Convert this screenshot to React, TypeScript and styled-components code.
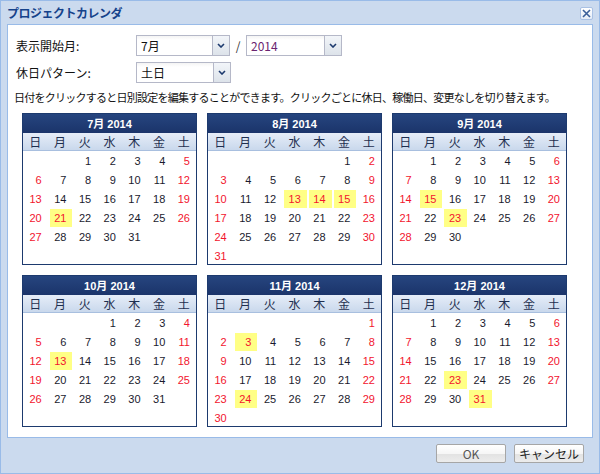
import React from "react";
import styled, { createGlobalStyle } from "styled-components";

const GlobalStyle = createGlobalStyle`
  html, body {
    margin: 0;
    padding: 0;
    background: #ffffff;
  }
  body {
    font-family: "Noto Sans CJK JP", "Liberation Sans", sans-serif;
  }
`;

const Window = styled.div`
  width: 600px;
  height: 474px;
  box-sizing: border-box;
  border: 1px solid #99bbe8;
  background: #cbdaee;
  display: flex;
  flex-direction: column;
  padding: 0 6px;
`;

const TitleBar = styled.div`
  height: 23px;
  display: flex;
  align-items: center;
  justify-content: space-between;
`;

const Title = styled.span`
  font-size: 12px;
  font-weight: bold;
  color: #15428b;
  letter-spacing: -0.5px;
`;

const CloseButton = styled.div`
  width: 11px;
  height: 11px;
  border: 1px solid #a9c1e4;
  border-radius: 2px;
  background: linear-gradient(#ffffff, #e4ecf7);
  display: flex;
  align-items: center;
  justify-content: center;
  margin-top: 1px;
`;

const Body = styled.div`
  height: 414px;
  box-sizing: border-box;
  background: #ffffff;
  border: 1px solid #99bbe8;
  padding: 10px 8px 0 6px;
`;

const FormRow = styled.div`
  display: flex;
  align-items: center;
  height: 21px;
  margin-bottom: 6px;
  padding-left: 2px;
`;

const Label = styled.div`
  width: 120px;
  font-size: 12px;
  color: #111;
`;

const Combo = styled.div<{ $w: number }>`
  width: ${({ $w }) => $w}px;
  height: 21px;
  box-sizing: border-box;
  display: flex;
  border: 1px solid #b5b8c8;
  background: linear-gradient(#f4f4f4 0, #ffffff 4px);
`;

const ComboText = styled.div<{ $color?: string }>`
  flex: 1;
  font-size: 12px;
  line-height: 19px;
  padding-left: 4px;
  color: ${({ $color }) => $color || "#111"};
`;

const Trigger = styled.div`
  width: 16px;
  border-left: 1px solid #b5b8c8;
  background: linear-gradient(#f2f5f9, #dde3ea);
  display: flex;
  align-items: center;
  justify-content: center;
`;

const Slash = styled.span`
  width: 16px;
  text-align: center;
  font-size: 12px;
  color: #333;
`;

const Note = styled.div`
  font-size: 11px;
  letter-spacing: -0.75px;
  color: #111;
  margin-top: -1px;
  height: 18px;
  line-height: 18px;
`;

const CalendarGrid = styled.div`
  display: grid;
  grid-template-columns: repeat(3, 175px);
  column-gap: 10px;
  row-gap: 10px;
  margin: 7px 0 0 8px;
`;

const Calendar = styled.div`
  border: 1px solid #1d3a6e;
  background: #ffffff;
  height: 150px;
`;

const CalHeader = styled.div`
  height: 19px;
  line-height: 20px;
  background: linear-gradient(#26457f, #1b346a);
  color: #ffffff;
  text-align: center;
  font-size: 11px;
  font-weight: bold;
  font-family: "Liberation Sans", "Noto Sans CJK JP", sans-serif;
`;

const DowRow = styled.div`
  display: grid;
  grid-template-columns: repeat(7, 1fr);
  height: 18px;
  box-sizing: border-box;
  background: linear-gradient(#e6edf8, #c9d8ec);
  border-bottom: 1px solid #a8bfdf;
`;

const Dow = styled.div`
  text-align: center;
  font-size: 12px;
  line-height: 17px;
  color: #1f2f4f;
`;

const Days = styled.div`
  display: grid;
  grid-template-columns: repeat(7, 1fr);
  grid-auto-rows: 19px;
`;

const Day = styled.div<{ $red: boolean; $holiday: boolean }>`
  margin: 1px 0 0 2px;
  height: 18px;
  line-height: 18px;
  text-align: right;
  padding-right: 6px;
  font-size: 11px;
  font-family: "Liberation Sans", sans-serif;
  color: ${({ $red }) => ($red ? "#f2142e" : "#1a1a2e")};
  background: ${({ $holiday }) => ($holiday ? "#ffff85" : "transparent")};
`;

const Footer = styled.div`
  flex: 1;
  display: flex;
  justify-content: flex-end;
  align-items: flex-start;
  gap: 8px;
  padding: 6px 9px 0 0;
`;

const Button = styled.div<{ $dim?: boolean }>`
  width: 70px;
  height: 19px;
  box-sizing: border-box;
  border: 1px solid #a6a6a6;
  border-radius: 2px;
  background: linear-gradient(#ffffff 0, #f6f6f6 50%, #e2e2e2 51%, #ececec 100%);
  font-size: 12px;
  line-height: 17px;
  text-align: center;
  color: ${({ $dim }) => ($dim ? "#555" : "#222")};
`;

const Chevron = () => (
  <svg width="8" height="5" viewBox="0 0 8 5">
    <path d="M1 1 L4 4 L7 1" stroke="#1d3a6e" strokeWidth="1.6" fill="none" />
  </svg>
);

const DOW = ["日", "月", "火", "水", "木", "金", "土"];

// 祝日 (month index -> days)
const HOLIDAYS: Record<number, number[]> = {
  6: [21],
  7: [13, 14, 15],
  8: [15, 23],
  9: [13],
  10: [3, 24],
  11: [23, 31],
};

function MonthCalendar({ month }: { month: number }) {
  const first = new Date(2014, month, 1).getDay();
  const count = new Date(2014, month + 1, 0).getDate();
  const cells: (number | null)[] = [];
  for (let i = 0; i < first; i++) cells.push(null);
  for (let d = 1; d <= count; d++) cells.push(d);
  const holidays = HOLIDAYS[month] || [];

  return (
    <Calendar>
      <CalHeader>{month + 1}月 2014</CalHeader>
      <DowRow>
        {DOW.map((d) => (
          <Dow key={d}>{d}</Dow>
        ))}
      </DowRow>
      <Days>
        {cells.map((d, i) => {
          if (d === null) return <div key={i} />;
          const wd = i % 7;
          const hol = holidays.includes(d);
          return (
            <Day key={i} $red={hol || wd === 0 || wd === 6} $holiday={hol}>
              {d}
            </Day>
          );
        })}
      </Days>
    </Calendar>
  );
}

export default function App() {
  return (
    <>
      <GlobalStyle />
      <Window>
        <TitleBar>
          <Title>プロジェクトカレンダ</Title>
          <CloseButton>
            <svg width="9" height="9" viewBox="0 0 9 9">
              <path d="M1 1 L8 8 M8 1 L1 8" stroke="#3a5f99" strokeWidth="1.6" />
            </svg>
          </CloseButton>
        </TitleBar>
        <Body>
          <FormRow>
            <Label>表示開始月:</Label>
            <Combo $w={94}>
              <ComboText>7月</ComboText>
              <Trigger>
                <Chevron />
              </Trigger>
            </Combo>
            <Slash>/</Slash>
            <Combo $w={96}>
              <ComboText $color="#6a2470">2014</ComboText>
              <Trigger>
                <Chevron />
              </Trigger>
            </Combo>
          </FormRow>
          <FormRow>
            <Label>休日パターン:</Label>
            <Combo $w={95}>
              <ComboText>土日</ComboText>
              <Trigger>
                <Chevron />
              </Trigger>
            </Combo>
          </FormRow>
          <Note>
            日付をクリックすると日別設定を編集することができます。クリックごとに休日、稼働日、変更なしを切り替えます。
          </Note>
          <CalendarGrid>
            {[6, 7, 8, 9, 10, 11].map((m) => (
              <MonthCalendar key={m} month={m} />
            ))}
          </CalendarGrid>
        </Body>
        <Footer>
          <Button $dim>OK</Button>
          <Button>キャンセル</Button>
        </Footer>
      </Window>
    </>
  );
}
